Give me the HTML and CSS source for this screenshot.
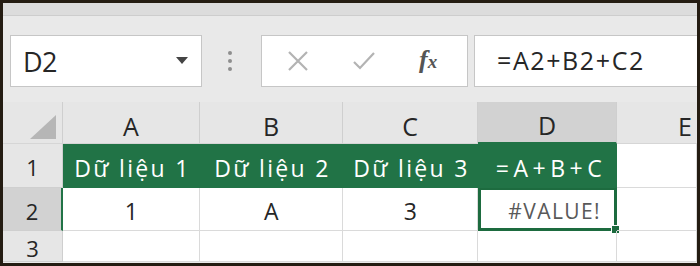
FILE: index.html
```html
<!DOCTYPE html>
<html>
<head>
<meta charset="utf-8">
<link rel="stylesheet" href="styles.css">
</head>
<body>
<div class="frame">
  <div class="strip"></div>
  <div class="fbar">
    <div class="namebox">
      <span class="ref">D2</span>
      <svg class="caret" width="12" height="7" viewBox="0 0 12 7"><path d="M0 0H12L6 7Z" fill="#444"/></svg>
    </div>
    <div class="grip"><i></i><i></i><i></i></div>
    <div class="btns">
      <svg class="ic x" width="22" height="22" viewBox="0 0 22 22"><path d="M2 2L20 20M20 2L2 20" stroke="#b3b3b3" stroke-width="2.2" fill="none"/></svg>
      <svg class="ic ok" width="22" height="18" viewBox="0 0 22 18"><path d="M1 10L7 16L21 1" stroke="#b3b3b3" stroke-width="2.2" fill="none"/></svg>
      <span class="fx">f<span class="fxx">x</span></span>
    </div>
    <div class="formula">=A2+B2+C2</div>
  </div>
  <div class="sheet">
    <div class="hd corner"><span class="tri"></span></div>
    <div class="hd col">A</div>
    <div class="hd col">B</div>
    <div class="hd col">C</div>
    <div class="hd col sel">D</div>
    <div class="hd col last">E</div>

    <div class="hd row">1</div>
    <div class="c g">Dữ liệu 1</div>
    <div class="c g">Dữ liệu 2</div>
    <div class="c g">Dữ liệu 3</div>
    <div class="c g wide">=A+B+C</div>
    <div class="c"></div>

    <div class="hd row rsel">2</div>
    <div class="c">1</div>
    <div class="c">A</div>
    <div class="c">3</div>
    <div class="c active">#VALUE!<span class="handle"></span></div>
    <div class="c"></div>

    <div class="hd row">3</div>
    <div class="c"></div>
    <div class="c"></div>
    <div class="c"></div>
    <div class="c"></div>
    <div class="c"></div>
  </div>
</div>
</body>
</html>
```
FILE: styles.css
```css
* { box-sizing: border-box; }
html, body { margin: 0; padding: 0; }
body { background: #fff; font-family: "Open Sans", "Noto Sans", sans-serif; }
.frame {
  width: 700px; height: 266px;
  border: 3px solid #241c12;
  background: #e9e9e9;
  overflow: hidden;
  display: flex; flex-direction: column;
}
.strip { height: 13px; background: #dcdcdc; border-bottom: 1px solid #cdcdcd; flex: none; }
.fbar { display: flex; height: 73px; padding: 19px 0 0 7px; flex: none; align-items: flex-start; }
.namebox {
  width: 192px; height: 52px; background: #fff; border: 1px solid #c6c6c6;
  display: flex; align-items: center; justify-content: space-between; padding: 0 13px 0 12px;
}
.ref { font-size: 27px; color: #262626; letter-spacing: -0.5px; }
.caret { margin-top: -2px; }
.grip { width: 59px; height: 52px; display: flex; flex-direction: column; align-items: center; justify-content: center; gap: 4px; padding-right: 4px; }
.grip i { display: block; width: 4px; height: 4px; border-radius: 50%; background: #8e8e8e; }
.btns {
  width: 207px; height: 52px; background: #fff; border: 1px solid #c6c6c6;
  display: flex; align-items: center; padding: 0 0 0 25px;
}
.ic.x { margin-right: 44px; }
.ic.ok { margin-right: 44px; }
.fx { font-family: "Liberation Serif", serif; font-style: italic; font-weight: bold; font-size: 26px; color: #555; margin-top: -2px; }
.fxx { font-size: 19px; }
.formula {
  margin-left: 6px; flex: 1; height: 52px; background: #fff; border: 1px solid #c6c6c6; border-right: none;
  font-size: 25px; color: #262626; padding: 7px 0 0 22px; letter-spacing: 1.6px;
}
.sheet {
  display: grid; margin-top: 13px;
  grid-template-columns: 60px 137px 143px 135px 139px 1fr;
  grid-template-rows: 42px 44px 43px 31px;
  background: #fff;
  font-size: 23px;
}
.hd { background: #e6e6e6; color: #262626; display: flex; align-items: center; justify-content: center; }
.col { border-right: 1px solid #cfcfcf; border-bottom: 1px solid #d6d6d6; padding-top: 6px; font-size: 25px; }
.col.last { border-right: none; justify-content: flex-end; padding-right: 5px; }
.col.sel { background: #d2d2d2; border-bottom: 2px solid #217346; }
.corner { border-right: 1px solid #cfcfcf; border-bottom: 1px solid #d6d6d6; position: relative; }
.tri { position: absolute; right: 6px; bottom: 4px; width: 0; height: 0; border-left: 26px solid transparent; border-bottom: 24px solid #b6b6b6; }
.row { border-right: 1px solid #cfcfcf; border-bottom: 1px solid #cfcfcf; font-size: 22px; padding-top: 3px; }
.row.rsel { background: #d2d2d2; border-right: 2px solid #217346; }
.c { border-right: 1px solid #dadada; border-bottom: 1px solid #dadada; display: flex; align-items: center; justify-content: center; color: #262626; position: relative; letter-spacing: 2.3px; padding-top: 4px; padding-left: 3px; }
.c.g { background: #217346; color: #fff; border-color: #217346; }
.c.wide { letter-spacing: 4.5px; padding-left: 8px; }
.c.active { border: 3px solid #1d6b3f; border-top-width: 2px; color: #595959; justify-content: flex-end; padding-right: 13px; font-size: 21px; letter-spacing: 1.4px; }
.handle { position: absolute; right: -6px; bottom: -6px; width: 9px; height: 9px; background: #1d6b3f; border: 1px solid #fff; }
```
